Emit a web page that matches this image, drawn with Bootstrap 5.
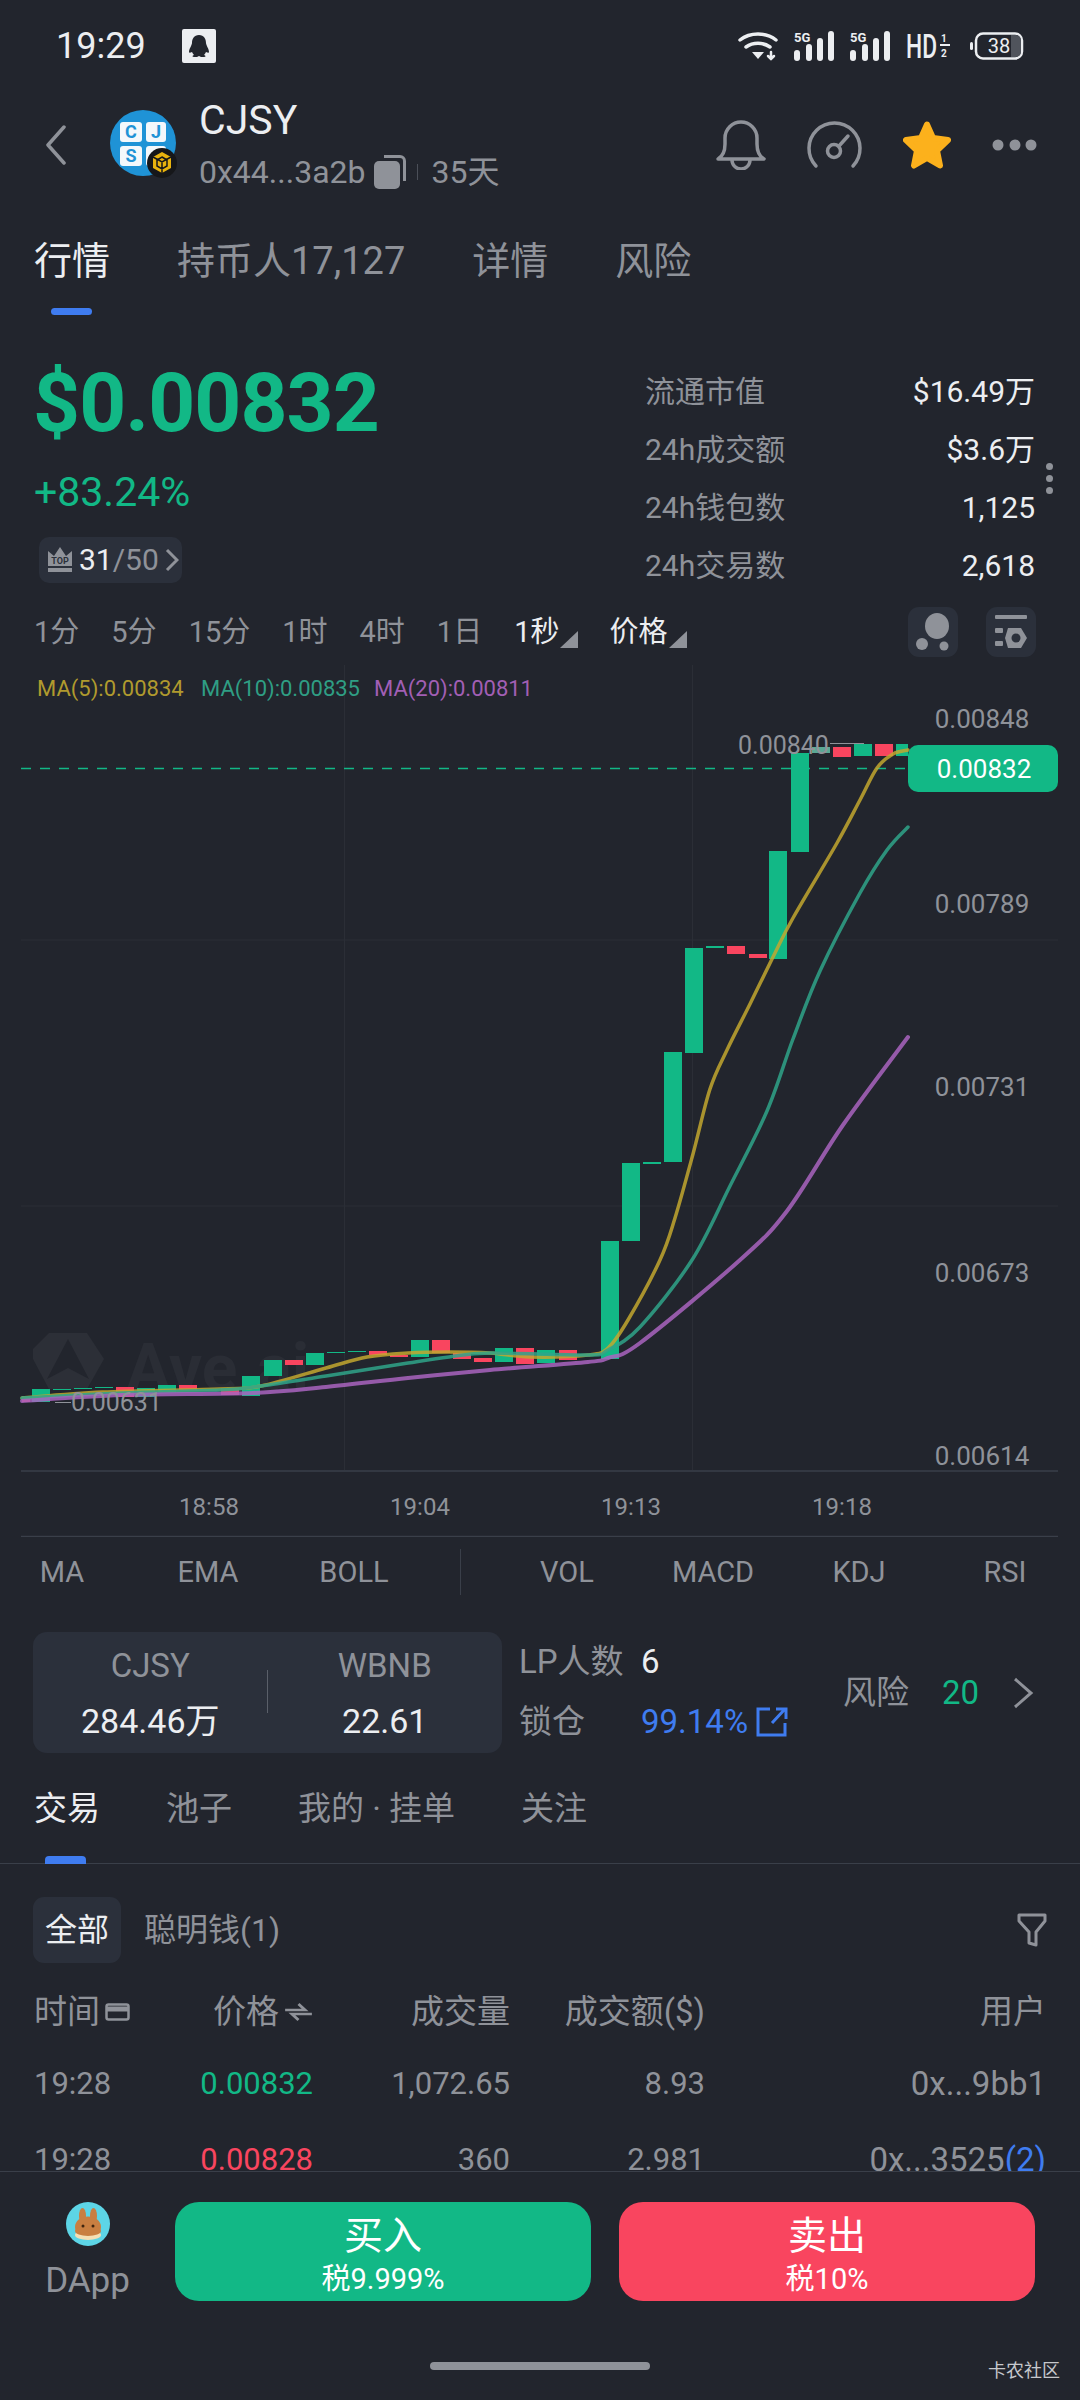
<!DOCTYPE html>
<html lang="zh-CN">
<head>
<meta charset="utf-8">
<title>CJSY</title>
<link href="https://cdn.jsdelivr.net/npm/bootstrap@5.3.0/dist/css/bootstrap.min.css" rel="stylesheet">
<style>
:root{--bg:#22252d;--panel:#2b303b;--mut:#8f9299;--grn:#12b886;--red:#f9455f;--blu:#3f7cf0;--txt:#eceef1}
html,body{background:var(--bg)}
body{width:1080px;height:2400px;overflow:hidden;position:relative;color:var(--mut);font-family:Roboto,"Noto Sans CJK SC",sans-serif;font-size:30px;line-height:1.2}
svg{display:block;flex:none}
svg text{font-family:Roboto,"Noto Sans CJK SC",sans-serif}
.sbar{height:92px;padding:0 56px}
.sbar-time{font-size:36px;color:var(--txt);line-height:44px;width:126px}
.hd-ico{overflow:visible}
.hdr{height:106px;padding:0 43px 0 45px}
.hdr-name{font-size:41px;color:var(--txt);line-height:46px;margin-top:-4px}
.hdr-sub{line-height:36px;margin-top:11px;font-size:32px}
.tabs-a{height:124px;padding:40px 0 0 34px;font-size:38px;gap:67px;position:relative;line-height:46px}
.tab-on{color:var(--txt)}
.bar-a{position:absolute;left:51px;top:110px;width:41px;height:7px;background:var(--blu);border-radius:4px}
.quote{padding:36px 45px 0 33px;height:285px;position:relative}
.px{font-size:82px;font-weight:700;color:var(--grn);line-height:90px;letter-spacing:-.9px}
.chg{font-size:41px;color:var(--grn);line-height:36px;margin-top:26px;margin-left:1px}
.rank{margin:27px 0 0 6px;height:46px;width:143px;background:var(--panel);border-radius:10px;padding-left:8px;gap:6px;font-size:30px}
.rank b{font-weight:400;color:var(--txt)}
.stats{width:390px;margin-top:5px}
.stat{height:58px}
.stat span:last-child{color:var(--txt)}
.handle{position:absolute;left:1046px;top:141px;width:8px;display:flex;flex-direction:column;gap:5px}
.handle i{display:block;width:7px;height:7px;border-radius:50%;background:var(--mut)}
.tf{height:50px;padding:0 44px 0 34px;font-size:29px;gap:32px}
.tf-on{color:var(--txt);position:relative;padding-right:19px;margin-right:-1px}
.tf-on::after{content:"";position:absolute;right:0;bottom:1px;border-left:18px solid transparent;border-bottom:17px solid #8f9299;}
.sq{width:50px;height:50px;background:var(--panel);border-radius:11px}
.sq-a{margin-right:-4px}
.chart{margin-top:8px}
.inds{display:grid;grid-template-columns:repeat(3,146px) 67px repeat(4,146px);margin-left:-11px;height:70px;font-size:29px;text-align:center;align-items:center}
.inds hr{margin:0 auto;width:1px;height:46px;border:0;background:#3a3f49;opacity:1}
.lp{margin-top:25px;height:121px;padding:0 46px 0 33px}
.lp-box{width:469px;height:121px;background:var(--panel);border-radius:14px;position:relative}
.lp-box::after{content:"";position:absolute;left:234px;top:38px;width:1px;height:43px;background:#5a5f69}
.lp-col{width:50%;padding-top:15px;font-size:33px;text-align:center}
.lp-col div{line-height:38px}
.lp-col div+div{color:var(--txt);margin-top:17px;font-size:34px}
.lp-mid{margin-left:17px;font-size:33px;width:324px}
.lp-mid>div{height:60px}
.lp-mid b{font-weight:400;color:var(--txt)}
.lbl-w{width:122px}
.blu{color:var(--blu)}
.grn{color:var(--grn)}
.red{color:var(--red)}
.tabs-b{height:111px;padding:36px 0 0 34px;font-size:33px;gap:66px;border-bottom:1px solid #3a3f49;position:relative;line-height:40px}
.bar-b{position:absolute;left:45px;bottom:-1px;width:41px;height:8px;background:var(--blu);border-radius:4px 4px 0 0}
.filt{height:121px;padding:33px 33px 0 33px;font-size:32px;gap:23px}
.pill{height:66px;width:88px;background:var(--panel);border-radius:11px;color:var(--txt)}
.list{height:186px;overflow:hidden;font-size:31px}
.rw{display:grid;grid-template-columns:120px 159px 197px 195px 340px;padding-left:34px;align-items:center;height:76px}
.rw>:nth-child(n+2){text-align:right}
.rw>:last-child{font-size:33px;margin-right:-1px}
.rw-h{height:54px;margin-bottom:7px;font-size:33px}
.foot{border-top:1px solid #3a3f49;height:229px;padding:30px 44px 0 0;position:relative;background:var(--bg)}
.dapp{width:175px;text-align:center;font-size:35px;line-height:40px}
.trade{height:99px;border-radius:24px;width:416px;color:#fff;text-align:center;padding-top:12px;font-size:29px;line-height:34px;border:0}
.trade b{display:block;font-weight:400;font-size:39px;line-height:44px;margin-bottom:4px}
.t-buy{background:var(--grn)}
.t-sell{background:var(--red);margin-left:28px}
.home{position:absolute;left:430px;top:190px;width:220px;height:8px;border-radius:4px;background:var(--mut)}
.brand{position:absolute;left:988px;top:188px;font-size:18px;color:#c6c8cc;line-height:22px}
</style>
</head>
<body>

<div class="sbar d-flex align-items-center">
  <div class="sbar-time">19:29</div>
  <svg width="34" height="34" viewBox="0 0 34 34"><rect width="34" height="34" rx="2" fill="#eceef1"/><path d="M17 6c-5 0-7 4-7 8 0 2-3 6-3 9 0 1 1 1 3 0 .5 1 1 2 2 3-2 .5-2 2 0 2h3l2-1 2 1h3c2 0 2-1.500 0-2 1-1 1.500-2 2-3 2 1 3 1 3 0 0-3-3-7-3-9 0-4-2-8-7-8z" fill="#22252d"/></svg>
  <div class="ms-auto d-flex align-items-center" style="gap:16px">
    <svg width="40" height="30" viewBox="0 0 40 30" fill="none" stroke="#eceef1" stroke-width="3.500" stroke-linecap="round"><path d="M2 9c10-8 26-8 36 0"/><path d="M8 16c7-5 17-5 24 0"/><path d="M14 21h12l-6 7z" fill="#eceef1" stroke="none"/><path d="M33 21v7M30 25l3 3 3-3" stroke-width="2.500"/></svg>
    <svg width="40" height="30" viewBox="0 0 40 30"><text x="0" y="11" font-size="13" font-weight="700" fill="#eceef1">5G</text><g fill="#eceef1"><rect x="0" y="19" width="6" height="11" rx="3"/><rect x="12" y="13" width="6" height="17" rx="3"/><rect x="23" y="7" width="6" height="23" rx="3"/><rect x="34" y="0" width="6" height="30" rx="3"/></g></svg>
    <svg width="40" height="30" viewBox="0 0 40 30"><text x="0" y="11" font-size="13" font-weight="700" fill="#eceef1">5G</text><g fill="#eceef1"><rect x="0" y="19" width="6" height="11" rx="3"/><rect x="12" y="13" width="6" height="17" rx="3"/><rect x="23" y="7" width="6" height="23" rx="3"/><rect x="34" y="0" width="6" height="30" rx="3"/></g></svg>
    <svg class="hd-ico" width="46" height="30" viewBox="0 0 46 30"><text x="0" y="27" font-size="33" font-weight="500" fill="#eceef1" textLength="31" lengthAdjust="spacingAndGlyphs">HD</text><text x="35" y="11" font-size="10" font-weight="700" fill="#eceef1">1</text><rect x="34" y="13" width="10" height="2" fill="#eceef1"/><text x="35" y="26" font-size="10" font-weight="700" fill="#eceef1">2</text></svg>
    <svg width="54" height="28" viewBox="0 0 54 28" style="margin-left:2px"><rect x="0" y="10" width="3" height="8" rx="1.500" fill="#eceef1"/><rect x="6" y="1.500" width="46" height="25" rx="7" fill="#22252d" stroke="#eceef1" stroke-width="2.500"/><path d="M41 3h5a5 5 0 0 1 5 5v12a5 5 0 0 1-5 5h-5z" fill="#50545c"/><text x="29" y="21" text-anchor="middle" font-size="20" fill="#eceef1">38</text></svg>
  </div>
</div>

<div class="hdr d-flex align-items-center">
  <svg width="22" height="40" viewBox="0 0 22 40" fill="none" stroke="#8f9299" stroke-width="3.500" stroke-linecap="round" stroke-linejoin="round"><path d="M19 2 3 20l16 18"/></svg>
  <svg width="80" height="80" viewBox="0 0 80 80" style="margin-left:40px">
    <circle cx="36" cy="38" r="33" fill="#1f93d6"/>
    <g fill="#f4f8fb"><rect x="13" y="17" width="22" height="20" rx="3"/><rect x="39" y="17" width="20" height="20" rx="3"/><rect x="13" y="41" width="22" height="20" rx="3"/><rect x="39" y="41" width="20" height="20" rx="3"/></g>
    <g fill="#1f93d6" font-size="18" font-weight="700" text-anchor="middle"><text x="24" y="33">C</text><text x="49" y="33">J</text><text x="24" y="57">S</text></g>
    <circle cx="55" cy="58" r="15" fill="#16171a"/>
    <path d="M55 47l9 5v11l-9 5-9-5V52z" fill="#e9b30e"/><path d="M55 52l5 3v6l-5 3-5-3v-6zM46 52l9 5 9-5M55 57v11" fill="none" stroke="#16171a" stroke-width="1.500"/>
  </svg>
  <div style="margin-left:12px">
    <div class="hdr-name">CJSY</div>
    <div class="hdr-sub d-flex align-items-center">
      <span>0x44...3a2b</span>
      <svg style="margin-left:9px" width="32" height="34" viewBox="0 0 32 34" fill="#8f9299"><path d="M10 0h16a6 6 0 0 1 6 6v20h-3V6a3 3 0 0 0-3-3H10z"/><rect x="0" y="6" width="26" height="28" rx="5"/></svg>
      <span style="width:1px;height:16px;background:#4b4f58;margin:0 13px 0 11px"></span>
      <span>35天</span>
    </div>
  </div>
  <div class="ms-auto d-flex align-items-center" style="gap:41px">
    <svg width="50" height="50" viewBox="0 0 50 50" fill="none" stroke="#8f9299" stroke-width="3.500" stroke-linejoin="round"><path d="M2 39q7-4 7-15v-6a16 16 0 0 1 32 0v6q0 11 7 15z"/><path d="M16 40a9 9 0 0 0 18 0"/></svg>
    <svg width="55" height="48" viewBox="0 0 55 48" fill="none" stroke="#8f9299" stroke-width="3.500" stroke-linecap="round"><path d="M9 45A25.500 25.500 0 1 1 46 45"/><circle cx="27" cy="30" r="6.500"/><path d="M32 25l9-10"/></svg>
    <svg width="48" height="48" viewBox="0 0 48 48"><path d="M24 3.500l6 13.500 15 2-11 10.500 3 15-13-7.500-13 7.500 3-15L3 19l15-2z" fill="#fcb11c" stroke="#fcb11c" stroke-width="6" stroke-linejoin="round"/></svg>
    <svg width="45" height="12" viewBox="0 0 45 12" fill="#8f9299"><circle cx="6" cy="6" r="5.500"/><circle cx="23" cy="6" r="5.500"/><circle cx="39" cy="6" r="5.500"/></svg>
  </div>
</div>

<div class="tabs-a d-flex align-items-start">
  <span class="tab-on">行情</span><span>持币人17,127</span><span>详情</span><span>风险</span>
  <div class="bar-a"></div>
</div>

<div class="quote d-flex justify-content-between">
  <div>
    <div class="px">$0.00832</div>
    <div class="chg">+83.24%</div>
    <div class="rank d-flex align-items-center">
      <svg width="26" height="26" viewBox="0 0 26 26" fill="#8f9299"><path d="M1 4l6 5 6-9 6 9 6-5v15H1z"/><rect x="1" y="21" width="24" height="4"/><text x="13" y="17" font-size="9" font-weight="700" fill="#2b303b" text-anchor="middle">TOP</text></svg>
      <span><b>31</b>/50</span>
      <svg width="14" height="24" viewBox="0 0 14 24" fill="none" stroke="#8f9299" stroke-width="3"><path d="M2 2l10 10L2 22"/></svg>
    </div>
  </div>
  <div class="stats">
    <div class="stat d-flex justify-content-between align-items-center"><span>流通市值</span><span>$16.49万</span></div>
    <div class="stat d-flex justify-content-between align-items-center"><span>24h成交额</span><span>$3.6万</span></div>
    <div class="stat d-flex justify-content-between align-items-center"><span>24h钱包数</span><span>1,125</span></div>
    <div class="stat d-flex justify-content-between align-items-center"><span>24h交易数</span><span>2,618</span></div>
  </div>
  <div class="handle"><i></i><i></i><i></i></div>
</div>

<div class="tf d-flex align-items-center">
  <span>1分</span><span>5分</span><span>15分</span><span>1时</span><span>4时</span><span>1日</span><span class="tf-on">1秒</span><span class="tf-on">价格</span>
  <div class="sq sq-a ms-auto d-flex align-items-center justify-content-center"><svg width="36" height="38" viewBox="0 0 36 38" fill="#8f9299"><ellipse cx="22" cy="13" rx="12" ry="13"/><circle cx="7" cy="31" r="6"/><circle cx="29" cy="33" r="4.500"/></svg></div>
  <div class="sq d-flex align-items-center justify-content-center"><svg width="32" height="34" viewBox="0 0 32 34" fill="#8f9299"><rect x="0" y="0" width="32" height="4" rx="1"/><rect x="0" y="13" width="8" height="5" rx="1"/><rect x="0" y="26" width="8" height="5" rx="1"/><path d="M13 13h13l6 10-6 10H13l-3-10z"/><circle cx="21" cy="23" r="4.500" fill="#2b303b"/></svg></div>
</div>

<svg class="chart" width="1080" height="872" viewBox="0 665 1080 872">
  <g stroke="#2b2e36" stroke-width="1"><path d="M344.500 665V1470M692.500 665V1470M21 940H1058M21 1206H1058"/></g>
  <path d="M42 1350l16-16h38l17 26-17 30H58l-16-30z" fill="#2c2f37" transform="translate(-9 -1)"/>
  <path d="M68 1339l-21 40 21-11 21 11z" fill="#22252d"/>
  <text x="126" y="1391" font-size="66" font-weight="700" fill="#2a2d35">Ave.ai</text>
  <text x="37" y="696" font-size="22" fill="#b09a2e">MA(5):0.00834</text>
  <text x="201" y="696" font-size="22" fill="#2f9e84">MA(10):0.00835</text>
  <text x="374" y="696" font-size="22" fill="#a25fb5">MA(20):0.00811</text>

  <g fill="#12b886">
    <rect x="601" y="1241" width="18" height="118"/><rect x="622" y="1163" width="18" height="78"/><rect x="643" y="1162" width="18" height="2"/><rect x="664" y="1052" width="18" height="110"/><rect x="685" y="948" width="18" height="105"/><rect x="706" y="946" width="18" height="2"/><rect x="769" y="851" width="18" height="108"/><rect x="791" y="753" width="18" height="99"/><rect x="812" y="747" width="18" height="6" fill="#5aa894"/><rect x="854" y="744" width="18" height="12"/><rect x="896" y="744" width="12" height="12"/>
    <rect x="495" y="1348" width="18" height="14"/><rect x="537" y="1350" width="18" height="13"/><rect x="411" y="1340" width="18" height="17"/><rect x="348" y="1351" width="18" height="1"/><rect x="327" y="1352" width="18" height="1"/><rect x="306" y="1353" width="18" height="12"/><rect x="264" y="1360" width="18" height="16"/><rect x="242" y="1376" width="18" height="20"/><rect x="200" y="1389" width="18" height="1"/><rect x="158" y="1385" width="18" height="7"/><rect x="137" y="1388" width="18" height="9"/><rect x="95" y="1387" width="18" height="1"/><rect x="74" y="1388" width="18" height="1"/><rect x="53" y="1389" width="18" height="1"/><rect x="32" y="1389" width="18" height="13"/>
  </g>
  <g fill="#f9455f">
    <rect x="727" y="946" width="18" height="8"/><rect x="749" y="954" width="18" height="4"/><rect x="833" y="747" width="18" height="10"/><rect x="875" y="744" width="18" height="12"/>
    <rect x="559" y="1350" width="18" height="10"/><rect x="516" y="1348" width="18" height="16"/><rect x="474" y="1358" width="18" height="4"/><rect x="453" y="1353" width="18" height="6"/><rect x="432" y="1340" width="18" height="13"/><rect x="390" y="1355" width="18" height="2"/><rect x="369" y="1351" width="18" height="4"/><rect x="285" y="1360" width="18" height="5"/><rect x="221" y="1388" width="18" height="7"/><rect x="179" y="1385" width="18" height="5"/><rect x="116" y="1387" width="18" height="10"/><rect x="22" y="1396" width="8" height="6"/>
  </g>
  <path d="M21 768.500H908" stroke="#12b886" stroke-width="1.500" stroke-dasharray="10 9" fill="none"/>
  <g fill="none" stroke-opacity=".85" stroke-linejoin="round" stroke-linecap="round">
    <path id="ma5" stroke="#c2a72f" stroke-width="3.500"/>
    <path id="ma10" stroke="#2fa589" stroke-width="3.500"/>
    <path id="ma20" stroke="#a964bf" stroke-width="4"/>
  </g>
  <g fill="#8f9299" font-size="26">
    <text x="738" y="754" font-size="25">0.00840</text>
    <path d="M830 743.500h34M55 1402.500h16" stroke="#8f9299" stroke-width="1"/>
    <text x="71" y="1411" font-size="25">0.00631</text>
    <g text-anchor="middle"><text x="982" y="728">0.00848</text><text x="982" y="913">0.00789</text><text x="982" y="1096">0.00731</text><text x="982" y="1282">0.00673</text><text x="982" y="1465">0.00614</text></g>
    <g text-anchor="middle" font-size="24"><text x="209" y="1515">18:58</text><text x="420" y="1515">19:04</text><text x="631" y="1515">19:13</text><text x="842" y="1515">19:18</text></g>
  </g>
  <rect x="908" y="745" width="150" height="47" rx="10" fill="#12b886"/>
  <text x="984" y="778" font-size="26" fill="#fff" text-anchor="middle">0.00832</text>
  <path d="M21 1471H1058M21 1536.500H1058" stroke="#3a3f49" stroke-width="1.500"/>
</svg>

<div class="inds">
  <span>MA</span><span>EMA</span><span>BOLL</span><hr><span>VOL</span><span>MACD</span><span>KDJ</span><span>RSI</span>
</div>

<div class="lp d-flex">
  <div class="lp-box d-flex">
    <div class="lp-col"><div>CJSY</div><div>284.46万</div></div>
    <div class="lp-col"><div>WBNB</div><div>22.61</div></div>
  </div>
  <div class="lp-mid">
    <div class="d-flex align-items-center"><span class="lbl-w">LP人数</span><b>6</b></div>
    <div class="d-flex align-items-center"><span class="lbl-w">锁仓</span><span class="blu">99.14%</span>
      <svg class="ms-2" width="32" height="30" viewBox="0 0 32 30" fill="none" stroke="#3f7cf0" stroke-width="3"><path d="M14 2H2v26h27V16M16 16 29 2M20 2h10v10" /></svg>
    </div>
  </div>
  <div class="flex-grow-1 d-flex align-items-center justify-content-between" style="font-size:33px">
    <span>风险</span><span class="grn">20</span>
    <svg width="22" height="32" viewBox="0 0 22 32" fill="none" stroke="#8f9299" stroke-width="3"><path d="M3 2l16 14L3 30"/></svg>
  </div>
</div>

<div class="tabs-b d-flex align-items-start">
  <span class="tab-on">交易</span><span>池子</span><span>我的 · 挂单</span><span>关注</span>
  <div class="bar-b"></div>
</div>

<div class="filt d-flex align-items-start">
  <div class="pill d-flex align-items-center justify-content-center">全部</div>
  <div style="line-height:66px">聪明钱(1)</div>
  <svg class="ms-auto" style="margin-top:16px" width="30" height="34" viewBox="0 0 30 34" fill="none" stroke="#8f9299" stroke-width="3" stroke-linejoin="round"><path d="M2 2h26v6l-9 11v13l-7-2V19L2 8z"/></svg>
</div>

<div class="list">
  <div class="rw rw-h">
    <span class="d-flex align-items-center" style="gap:5px">时间<svg width="25" height="18" viewBox="0 0 25 18" fill="none" stroke="#8f9299" stroke-width="2.500"><rect x="1.500" y="1.500" width="22" height="15" rx="2"/><path d="M1.500 6h22" stroke-width="5"/></svg></span>
    <span class="d-flex align-items-center justify-content-end" style="gap:5px">价格<svg width="29" height="18" viewBox="0 0 26 18" preserveAspectRatio="none" fill="none" stroke="#8f9299" stroke-width="2.500"><path d="M1 7h18L13 1M25 11H7l6 6"/></svg></span>
    <span>成交量</span><span>成交额($)</span><span>用户</span>
  </div>
  <div class="rw"><span>19:28</span><span class="grn">0.00832</span><span>1,072.65</span><span>8.93</span><span>0x...9bb1</span></div>
  <div class="rw"><span>19:28</span><span class="red">0.00828</span><span>360</span><span>2.981</span><span>0x...3525<span class="blu">(2)</span></span></div>
</div>

<div class="foot d-flex align-items-start">
  <div class="dapp">
    <svg class="mx-auto" width="44" height="44" viewBox="0 0 44 44"><circle cx="22" cy="22" r="22" fill="#5dd5e6"/><ellipse cx="16.500" cy="14" rx="3.500" ry="8" fill="#c97f41"/><ellipse cx="27.500" cy="14" rx="3.500" ry="8" fill="#c97f41"/><ellipse cx="22" cy="25" rx="13" ry="10.500" fill="#c97f41"/><ellipse cx="22" cy="33" rx="13" ry="5" fill="#f5dfb4"/><ellipse cx="22" cy="29" rx="13" ry="5" fill="#c97f41"/><circle cx="17" cy="24" r="1.500" fill="#40250f"/><circle cx="27" cy="24" r="1.500" fill="#40250f"/></svg>
    <div style="margin-top:15px">DApp</div>
  </div>
  <button type="button" class="btn trade t-buy"><b>买入</b>税9.999%</button>
  <button type="button" class="btn trade t-sell"><b>卖出</b>税10%</button>
  <div class="home"></div>
  <div class="brand">卡农社区</div>
</div>

<script>
// Moving-average curves: smooth (Catmull-Rom) paths through sampled chart points.
var series = {
  ma5: [[22,1398],[102,1392],[220,1389],[261,1386],[326,1368],[367,1357],[408,1353],[449,1352],[490,1353],[530,1357],[588,1355],[608,1348],[628,1320],[660,1260],[675,1218],[693,1154],[710,1089],[727,1050],[750,1004],[773,957],[793,918],[837,843],[860,800],[877,768],[893,754],[908,750]],
  ma10: [[22,1398],[122,1393],[220,1390],[261,1386],[326,1376],[408,1363],[449,1357],[490,1353],[588,1355],[608,1350],[640,1327],[692,1260],[730,1186],[767,1111],[793,1039],[820,971],[860,893],[887,850],[908,827]],
  ma20: [[22,1401],[122,1395],[253,1393],[326,1387],[408,1378],[490,1370],[588,1362],[608,1358],[640,1343],[740,1260],[787,1211],[843,1125],[908,1037]]
};
Object.keys(series).forEach(function (id) {
  var p = series[id], d = 'M' + p[0][0] + ' ' + p[0][1];
  for (var i = 0; i < p.length - 1; i++) {
    var a = p[Math.max(i - 1, 0)], b = p[i], c = p[i + 1], e = p[Math.min(i + 2, p.length - 1)];
    d += 'C' + (b[0] + (c[0] - a[0]) / 6) + ' ' + (b[1] + (c[1] - a[1]) / 6) + ' ' +
         (c[0] - (e[0] - b[0]) / 6) + ' ' + (c[1] - (e[1] - b[1]) / 6) + ' ' + c[0] + ' ' + c[1];
  }
  document.getElementById(id).setAttribute('d', d);
});
</script>
</body>
</html>
